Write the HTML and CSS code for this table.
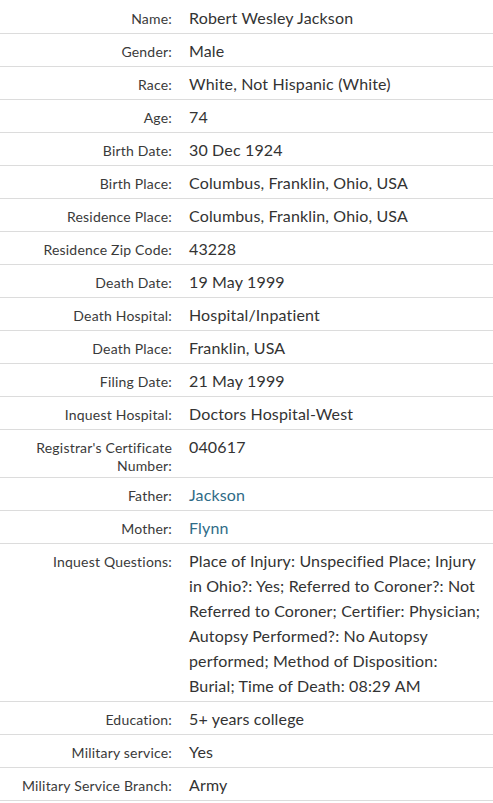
FILE: index.html
```html
<!DOCTYPE html>
<html>
<head>
<meta charset="utf-8">
<link rel="stylesheet" href="styles.css">
</head>
<body>
<table class="record">
  <tr><th>Name:</th><td>Robert Wesley Jackson</td></tr>
  <tr><th>Gender:</th><td>Male</td></tr>
  <tr><th>Race:</th><td>White, Not Hispanic (White)</td></tr>
  <tr><th>Age:</th><td>74</td></tr>
  <tr><th>Birth Date:</th><td>30 Dec 1924</td></tr>
  <tr><th>Birth Place:</th><td>Columbus, Franklin, Ohio, USA</td></tr>
  <tr><th>Residence Place:</th><td>Columbus, Franklin, Ohio, USA</td></tr>
  <tr><th>Residence Zip Code:</th><td>43228</td></tr>
  <tr><th>Death Date:</th><td>19 May 1999</td></tr>
  <tr><th>Death Hospital:</th><td>Hospital/Inpatient</td></tr>
  <tr><th>Death Place:</th><td>Franklin, USA</td></tr>
  <tr><th>Filing Date:</th><td>21 May 1999</td></tr>
  <tr><th>Inquest Hospital:</th><td>Doctors Hospital-West</td></tr>
  <tr><th>Registrar's Certificate Number:</th><td>040617</td></tr>
  <tr><th>Father:</th><td><a class="link" href="#">Jackson</a></td></tr>
  <tr><th>Mother:</th><td><a class="link" href="#">Flynn</a></td></tr>
  <tr><th>Inquest Questions:</th><td>Place of Injury: Unspecified Place; Injury in Ohio?: Yes; Referred to Coroner?: Not Referred to Coroner; Certifier: Physician; Autopsy Performed?: No Autopsy performed; Method of Disposition: Burial; Time of Death: 08:29 AM</td></tr>
  <tr><th>Education:</th><td>5+ years college</td></tr>
  <tr><th>Military service:</th><td>Yes</td></tr>
  <tr><th>Military Service Branch:</th><td>Army</td></tr>
</table>
</body>
</html>
```
FILE: styles.css
```css
html, body {
  margin: 0;
  padding: 0;
  background: #fff;
}
body {
  padding-top: 1px;
  font-family: "Lato", "Open Sans", sans-serif;
  color: #333;
}
.record {
  width: 493px;
  border-collapse: collapse;
  table-layout: fixed;
}
.record tr {
  border-bottom: 1px solid #dcdcdc;
}
.record th {
  width: 172px;
  padding: 9px 0 2px 0;
  text-align: right;
  vertical-align: top;
  font-weight: normal;
  font-size: 14px;
  letter-spacing: 0.2px;
  line-height: 18px;
  color: #3a3a3a;
}
.record td {
  padding: 4px 6px 3px 17px;
  vertical-align: top;
  font-size: 16px;
  letter-spacing: 0.15px;
  line-height: 25px;
  color: #333;
}
.link {
  color: #2f6b87;
  text-decoration: none;
}
```
